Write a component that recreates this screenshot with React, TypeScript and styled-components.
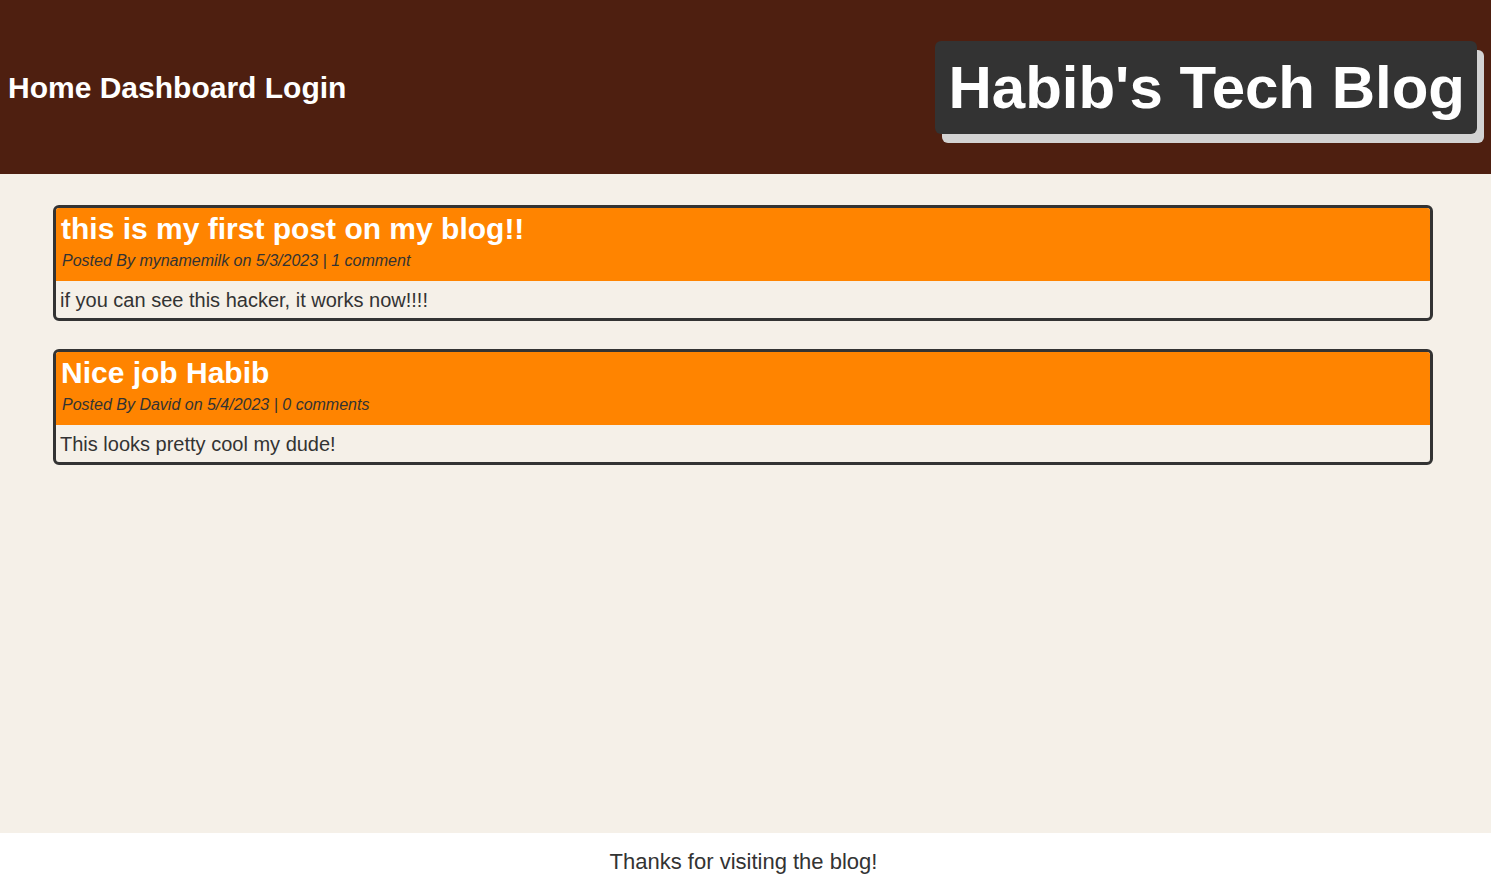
import React from "react";
import styled, { createGlobalStyle } from "styled-components";

const GlobalStyle = createGlobalStyle`
  html, body {
    margin: 0;
    padding: 0;
  }
  body {
    font-family: "Liberation Sans", Arial, sans-serif;
    background: #f5f0e8;
    color: #333;
  }
`;

const Page = styled.div`
  min-height: 100vh;
  display: flex;
  flex-direction: column;
`;

const Header = styled.header`
  height: 174px;
  box-sizing: border-box;
  background: #4e1f10;
  display: flex;
  align-items: center;
  justify-content: space-between;
  padding: 0 14px 0 8px;
`;

const Nav = styled.nav`
  font-size: 30px;
  font-weight: 700;
  color: #fff;
  padding-top: 2px;
`;

const NavLink = styled.a`
  color: #fff;
  text-decoration: none;
`;

const Title = styled.h1`
  margin: 0 0 0 1px;
  font-size: 60px;
  font-weight: 700;
  line-height: 69px;
  color: #fff;
  background: #333;
  padding: 12px 12px 12px 13px;
  border-radius: 6px;
  box-shadow: 7px 9px 0 #d3d3d3;
`;

const Main = styled.main`
  flex: 1;
  padding: 31px 58px 0 53px;
  display: flex;
  flex-direction: column;
  gap: 28px;
`;

const Card = styled.article`
  border: 3px solid #333;
  border-radius: 6px;
  overflow: hidden;
  background: #f5f0e8;
`;

const CardHead = styled.div`
  background: #ff8400;
  padding: 4px 5px 11px;
`;

const PostTitle = styled.h2`
  margin: 0;
  font-size: 30px;
  font-weight: 700;
  line-height: 34px;
  color: #fff;
`;

const Meta = styled.p`
  margin: 6px 0 0 1px;
  font-size: 16px;
  font-style: italic;
  line-height: 18px;
  color: #333;
`;

const CardBody = styled.p`
  margin: 0;
  padding: 8px 4px 6px;
  font-size: 20px;
  line-height: 23px;
  color: #333;
`;

const Footer = styled.footer`
  background: #fff;
  height: 55px;
  display: flex;
  align-items: center;
  justify-content: center;
  padding: 3px 4px 0 0;
  box-sizing: border-box;
  font-size: 22px;
  color: #333;
`;

const posts = [
  {
    title: "this is my first post on my blog!!",
    meta: "Posted By mynamemilk on 5/3/2023 | 1 comment",
    body: "if you can see this hacker, it works now!!!!",
  },
  {
    title: "Nice job Habib",
    meta: "Posted By David on 5/4/2023 | 0 comments",
    body: "This looks pretty cool my dude!",
  },
];

export default function App() {
  return (
    <>
      <GlobalStyle />
      <Page>
        <Header>
          <Nav>
            <NavLink href="#">Home</NavLink> <NavLink href="#">Dashboard</NavLink>{" "}
            <NavLink href="#">Login</NavLink>
          </Nav>
          <Title>Habib's Tech Blog</Title>
        </Header>
        <Main>
          {posts.map((p) => (
            <Card key={p.title}>
              <CardHead>
                <PostTitle>{p.title}</PostTitle>
                <Meta>{p.meta}</Meta>
              </CardHead>
              <CardBody>{p.body}</CardBody>
            </Card>
          ))}
        </Main>
        <Footer>Thanks for visiting the blog!</Footer>
      </Page>
    </>
  );
}
